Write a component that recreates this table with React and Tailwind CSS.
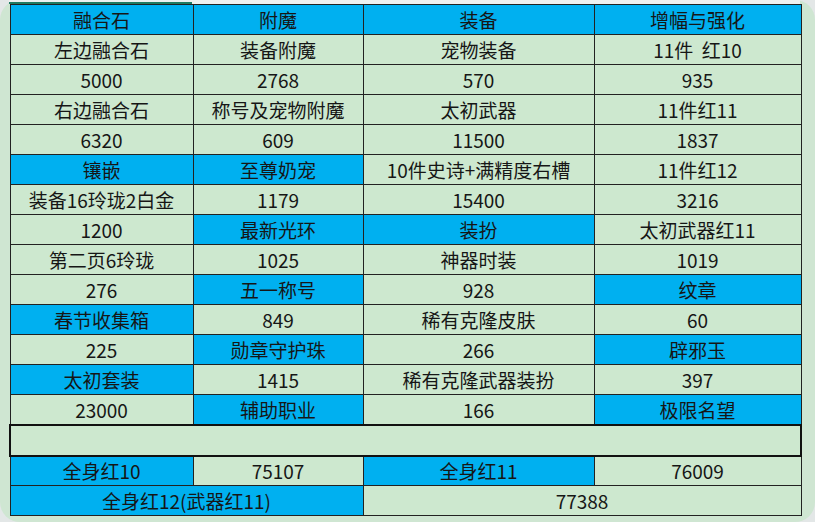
import React from "react";

const B = "b"; // blue cell
const G = "g"; // green cell

const rows = [
  [["融合石", B], ["附魔", B], ["装备", B], ["增幅与强化", B]],
  [["左边融合石", G], ["装备附魔", G], ["宠物装备", G], ["11件  红10", G]],
  [["5000", G], ["2768", G], ["570", G], ["935", G]],
  [["右边融合石", G], ["称号及宠物附魔", G], ["太初武器", G], ["11件红11", G]],
  [["6320", G], ["609", G], ["11500", G], ["1837", G]],
  [["镶嵌", B], ["至尊奶宠", B], ["10件史诗+满精度右槽", G], ["11件红12", G]],
  [["装备16玲珑2白金", G], ["1179", G], ["15400", G], ["3216", G]],
  [["1200", G], ["最新光环", B], ["装扮", B], ["太初武器红11", G]],
  [["第二页6玲珑", G], ["1025", G], ["神器时装", G], ["1019", G]],
  [["276", G], ["五一称号", B], ["928", G], ["纹章", B]],
  [["春节收集箱", B], ["849", G], ["稀有克隆皮肤", G], ["60", G]],
  [["225", G], ["勋章守护珠", B], ["266", G], ["辟邪玉", B]],
  [["太初套装", B], ["1415", G], ["稀有克隆武器装扮", G], ["397", G]],
  [["23000", G], ["辅助职业", B], ["166", G], ["极限名望", B]],
];

const cellBg = (c) => (c === B ? "bg-[#00b0f0]" : "bg-[#cde8cf]");

export default function App() {
  return (
    <div className="w-[815px] h-[522px] bg-[#e3e7e7] overflow-hidden">
      <div
        className="w-full h-full rounded-[20px] bg-[#cfe6d2] pl-[9px] text-[#161616]"
        style={{ fontFamily: '"Noto Sans CJK SC", "Noto Sans", sans-serif' }}
      >
        {/* strip above the sheet */}
        <div className="flex h-[4px] w-[791px]">
          <div className="w-[183px] h-full bg-[#eef1f1] border-b-2 border-[#1f7a62]" />
          <div className="flex-1 h-full bg-[#eef1f1]" />
        </div>

        <table className="border-collapse table-fixed w-[791px] text-[19px] leading-none">
          <colgroup>
            <col className="w-[183px]" />
            <col className="w-[170px]" />
            <col className="w-[231px]" />
            <col className="w-[207px]" />
          </colgroup>
          <tbody>
            {rows.map((row, i) => (
              <tr key={i} className="h-[30px]">
                {row.map(([text, c], j) => (
                  <td
                    key={j}
                    className={`${cellBg(c)} border border-[#222] text-center p-0 whitespace-pre`}
                  >
                    {text}
                  </td>
                ))}
              </tr>
            ))}
            <tr className="h-[31px]">
              <td colSpan={4} className="bg-[#cde8cf] border-2 border-[#111]" />
            </tr>
            <tr className="h-[30px]">
              <td className="bg-[#00b0f0] border border-[#222] text-center p-0">全身红10</td>
              <td className="bg-[#cde8cf] border border-[#222] text-center p-0">75107</td>
              <td className="bg-[#00b0f0] border border-[#222] text-center p-0">全身红11</td>
              <td className="bg-[#cde8cf] border border-[#222] text-center p-0">76009</td>
            </tr>
            <tr className="h-[30px]">
              <td colSpan={2} className="bg-[#00b0f0] border border-[#222] text-center p-0">
                全身红12(武器红11)
              </td>
              <td colSpan={2} className="bg-[#cde8cf] border border-[#222] text-center p-0">
                77388
              </td>
            </tr>
          </tbody>
        </table>
      </div>
    </div>
  );
}
